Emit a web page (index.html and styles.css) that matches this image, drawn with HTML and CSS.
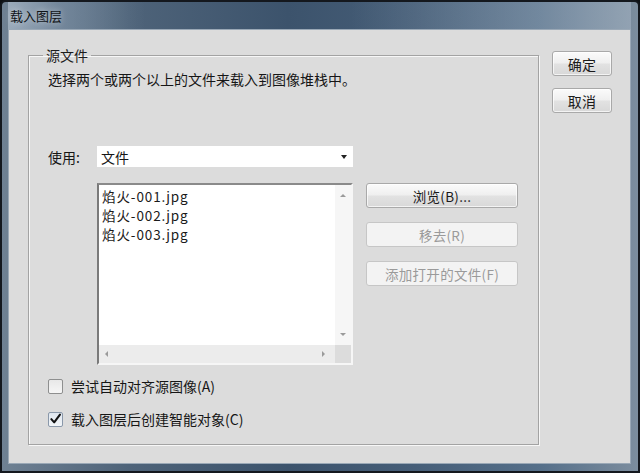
FILE: index.html
```html
<!DOCTYPE html>
<html lang="zh">
<head>
<meta charset="utf-8">
<title>载入图层</title>
<link rel="stylesheet" href="styles.css">
</head>
<body>
<div class="window">
  <div class="titlebar"><span class="title">载入图层</span></div>
  <div class="client">
    <fieldset class="group">
      <legend class="legend">源文件</legend>
      <div class="group-body">
        <p class="desc">选择两个或两个以上的文件来载入到图像堆栈中。</p>
        <div class="use-row">
          <span class="use-label">使用:</span>
          <div class="select">
            <span class="select-value">文件</span>
            <span class="select-arrow"></span>
          </div>
        </div>
        <div class="files-row">
          <div class="listbox">
            <div class="list-items">
              <div class="item">焰火-001.jpg</div>
              <div class="item">焰火-002.jpg</div>
              <div class="item">焰火-003.jpg</div>
            </div>
            <div class="vscroll">
              <span class="tri tri-up"></span>
              <span class="tri tri-down"></span>
            </div>
            <div class="hscroll">
              <span class="tri tri-left"></span>
              <span class="tri tri-right"></span>
            </div>
            <div class="corner"></div>
          </div>
          <div class="side-buttons">
            <div class="btn">浏览(B)...</div>
            <div class="btn disabled">移去(R)</div>
            <div class="btn disabled">添加打开的文件(F)</div>
          </div>
        </div>
        <div class="check-row first">
          <span class="checkbox"></span>
          <span class="check-label">尝试自动对齐源图像(A)</span>
        </div>
        <div class="check-row second">
          <span class="checkbox checked">
            <svg viewBox="0 0 14 14" width="14" height="14"><path d="M2.5 7.2 L5.6 10.6 L11.8 2.2" fill="none" stroke="#111" stroke-width="2.2" stroke-linecap="round" stroke-linejoin="round"/></svg>
          </span>
          <span class="check-label">载入图层后创建智能对象(C)</span>
        </div>
      </div>
    </fieldset>
    <div class="dialog-buttons">
      <div class="btn dlg">确定</div>
      <div class="btn dlg">取消</div>
    </div>
  </div>
</div>
</body>
</html>
```
FILE: styles.css
```css
* { box-sizing: border-box; }
html, body { margin: 0; padding: 0; }
body {
  width: 640px;
  height: 473px;
  overflow: hidden;
  background: #0d1014;
  font-family: "Noto Sans CJK SC", "Noto Sans", sans-serif;
  color: #161616;
}
.window {
  width: 640px;
  height: 473px;
  display: flex;
  flex-direction: column;
  border: 2px solid #14181e;
  border-radius: 6px 6px 0 0;
  background: linear-gradient(90deg, #6f8193 0%, #4e6379 20%, #3c536c 45%, #465e78 65%, #56708a 85%, #7c8d9e 100%);
  padding: 0 7px 7px 6px;
}
.titlebar {
  height: 27px;
  flex: none;
  display: flex;
  align-items: center;
  padding-left: 2px;
  background: linear-gradient(90deg, rgba(170,185,200,0.75) 0%, rgba(140,160,180,0.45) 8%, rgba(60,85,110,0) 22%, rgba(60,85,110,0) 55%, rgba(160,175,190,0.25) 75%, rgba(170,185,200,0.5) 100%);
}
.title {
  font-size: 13px;
  line-height: 16px;
  color: #101418;
  text-shadow: 0 0 6px rgba(255,255,255,0.6);
}
.client {
  flex: 1;
  display: flex;
  align-items: flex-start;
  background: #dcdcdc;
  border: 1px solid #9aa8b6;
  padding: 17px 0 0 19px;
}
.group {
  margin: 0;
  padding: 0;
  width: 511px;
  height: 398px;
  border: 1px solid #a3a3a3;
  box-shadow: inset 1px 1px 0 #f7f7f7, 1px 1px 0 #f7f7f7;
}
.legend {
  margin-left: 14px;
  padding: 0 3px;
  font-size: 14px;
  line-height: 16px;
  color: #1c1c1c;
}
.group-body {
  padding-left: 19px;
  display: flex;
  flex-direction: column;
}
.desc {
  margin: 7px 0 0;
  font-size: 14px;
  line-height: 18px;
  color: #161616;
}
.use-row {
  margin-top: 58px;
  display: flex;
  align-items: center;
  height: 21px;
}
.use-label {
  width: 49px;
  font-size: 14px;
  line-height: 18px;
}
.select {
  width: 256px;
  height: 21px;
  background: #ffffff;
  display: flex;
  align-items: center;
  justify-content: space-between;
  padding: 0 6px 0 4px;
}
.select-value {
  font-size: 14px;
  line-height: 18px;
}
.select-arrow {
  width: 0;
  height: 0;
  border-left: 3.5px solid transparent;
  border-right: 3.5px solid transparent;
  border-top: 4px solid #222;
}
.files-row {
  margin-top: 16px;
  margin-left: 49px;
  display: flex;
  gap: 13px;
}
.listbox {
  width: 256px;
  height: 182px;
  display: grid;
  grid-template-columns: 1fr 16px;
  grid-template-rows: 1fr 18px;
  background: #ffffff;
  border-top: 2px solid #8a8a8a;
  border-left: 2px solid #7a7a7a;
  border-right: 2px solid #f6f6f6;
  border-bottom: 2px solid #f6f6f6;
}
.list-items {
  padding: 2px 0 0 3px;
}
.item {
  font-size: 13.5px;
  line-height: 19px;
  color: #1a1a1a;
  letter-spacing: 0.9px;
}
.vscroll {
  background: #f6f6f6;
  display: flex;
  flex-direction: column;
  justify-content: space-between;
  align-items: center;
  padding: 9px 0 9px;
}
.hscroll {
  background: #ececec;
  display: flex;
  justify-content: space-between;
  align-items: center;
  padding: 0 10px 0 6px;
}
.corner {
  background: #dcdcdc;
}
.tri { width: 0; height: 0; display: block; }
.tri-up { border-left: 3px solid transparent; border-right: 3px solid transparent; border-bottom: 3px solid #9a9a9a; }
.tri-down { border-left: 3px solid transparent; border-right: 3px solid transparent; border-top: 3px solid #9a9a9a; }
.tri-left { border-top: 3px solid transparent; border-bottom: 3px solid transparent; border-right: 3px solid #9a9a9a; }
.tri-right { border-top: 3px solid transparent; border-bottom: 3px solid transparent; border-left: 3px solid #9a9a9a; }
.side-buttons {
  display: flex;
  flex-direction: column;
  gap: 14px;
}
.btn {
  width: 152px;
  height: 25px;
  display: flex;
  align-items: center;
  justify-content: center;
  font-size: 13.5px;
  line-height: 16px;
  color: #1a1a1a;
  border: 1px solid #a9a9a9;
  border-radius: 3px;
  background: linear-gradient(180deg, #fbfbfb 0%, #efefef 48%, #e2e2e2 52%, #d8d8d8 100%);
  box-shadow: inset 0 0 0 1px rgba(255,255,255,0.7);
  letter-spacing: 0.3px;
}
.btn.disabled {
  color: #9a9a9a;
  border-color: #c6c6c6;
  background: #f3f3f3;
  box-shadow: none;
}
.check-row {
  display: flex;
  align-items: center;
  height: 20px;
  gap: 8px;
}
.check-row.first { margin-top: 11px; }
.check-row.second { margin-top: 13px; }
.checkbox {
  width: 15px;
  height: 15px;
  border: 1px solid #8e8f8f;
  border-radius: 2px;
  background: linear-gradient(180deg, #e8e8e8, #f6f6f6);
  display: flex;
  align-items: center;
  justify-content: center;
}
.checkbox.checked {
  border-color: #8a98aa;
  background: linear-gradient(180deg, #dfe6ee, #f2f5f8);
}
.check-label {
  font-size: 14px;
  line-height: 18px;
  color: #161616;
}
.dialog-buttons {
  margin-left: 13px;
  margin-top: 4px;
  display: flex;
  flex-direction: column;
  gap: 12px;
}
.btn.dlg {
  width: 60px;
  height: 25px;
  font-size: 14px;
}
```
